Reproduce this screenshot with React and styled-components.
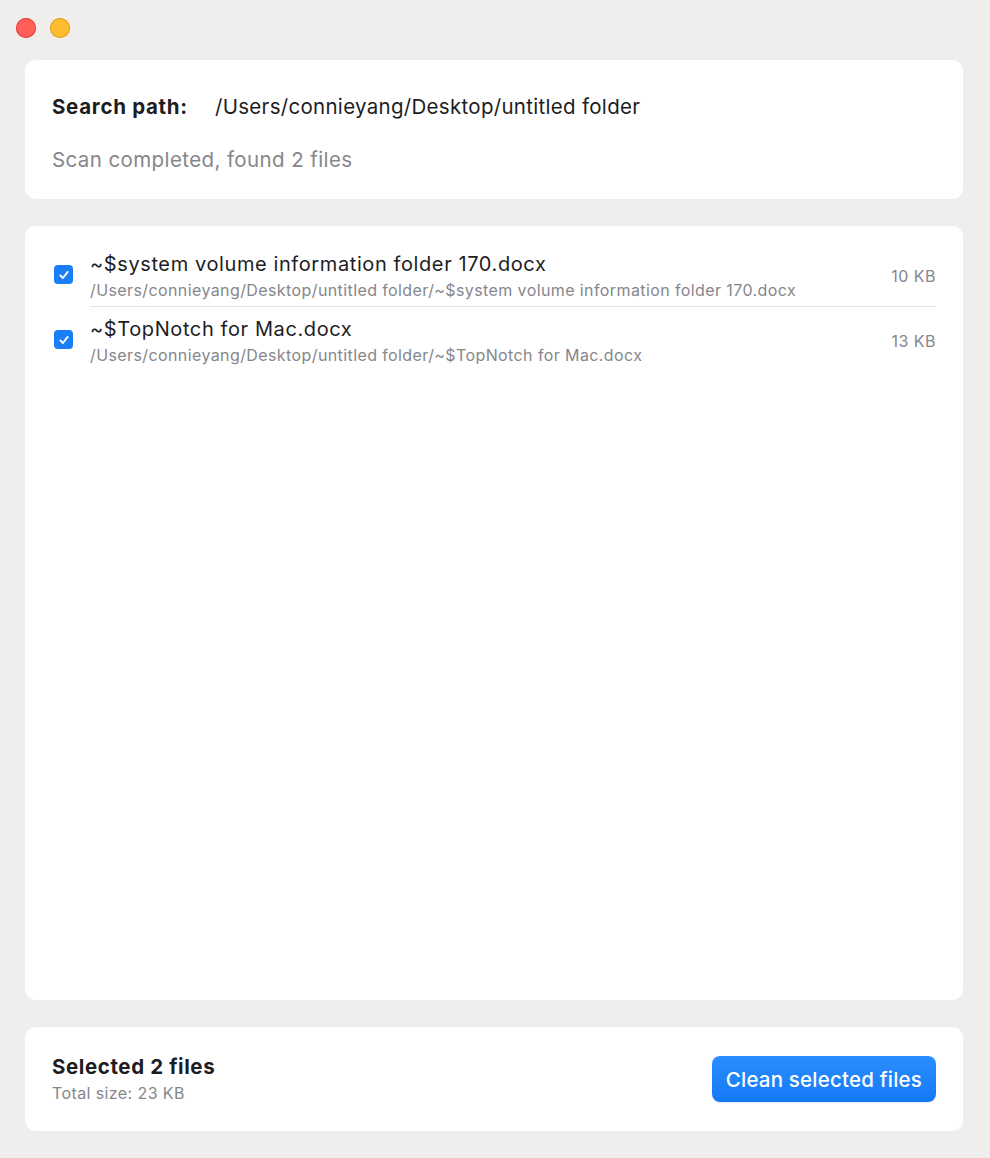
import React from 'react'
import styled, { createGlobalStyle } from 'styled-components'

const GlobalStyle = createGlobalStyle`
  html, body {
    margin: 0;
    padding: 0;
    background: #efeeec;
  }
  body {
    font-family: Inter, "Noto Sans", "Liberation Sans", sans-serif;
    -webkit-font-smoothing: antialiased;
  }
`

const Window = styled.div`
  width: 990px;
  height: 1158px;
  box-sizing: border-box;
  background: #efeeec;
  display: flex;
  flex-direction: column;
`

const TitleBar = styled.div`
  height: 56px;
  display: flex;
  align-items: center;
  gap: 14px;
  padding: 0 0 0 16px;
  box-sizing: border-box;
`

const Light = styled.span`
  width: 20px;
  height: 20px;
  border-radius: 50%;
  background: ${p => p.$color};
  box-shadow: inset 0 0 0 1px ${p => p.$edge};
`

const Content = styled.div`
  flex: 1;
  display: flex;
  flex-direction: column;
  gap: 27px;
  padding: 4px 27px 27px 25px;
  min-height: 0;
`

const Card = styled.div`
  background: #ffffff;
  border-radius: 11px;
  box-sizing: border-box;
`

const HeaderCard = styled(Card)`
  height: 139px;
  padding: 35px 27px 0;
  display: flex;
  flex-direction: column;
  gap: 29px;
`

const PathRow = styled.div`
  display: flex;
  align-items: baseline;
  font-size: 20.5px;
  line-height: 24px;
  color: #1d1d1f;
  letter-spacing: 0.3px;
`

const PathLabel = styled.span`
  font-weight: 700;
  width: 163px;
  letter-spacing: 0.7px;
`

const Status = styled.div`
  font-size: 20.5px;
  line-height: 24px;
  color: #86868b;
  letter-spacing: 0.4px;
`

const ListCard = styled(Card)`
  flex: 1;
  padding: 16px 27px 0 29px;
`

const FileRow = styled.div`
  display: flex;
  align-items: center;
  gap: 17px;
`

const Check = styled.span`
  flex: none;
  width: 19px;
  height: 19px;
  border-radius: 4px;
  background: #1a7ef6;
  display: flex;
  align-items: center;
  justify-content: center;
`

const FileBody = styled.div`
  flex: 1;
  display: flex;
  align-items: center;
  padding: 10px 0 6px;
  border-bottom: 1.5px solid ${p => (p.$divider ? '#e1e1e3' : 'transparent')};
`

const FileText = styled.div`
  flex: 1;
  display: flex;
  flex-direction: column;
  gap: 4px;
`

const FileName = styled.div`
  font-size: 20px;
  line-height: 24px;
  color: #1d1d1f;
  letter-spacing: 0.6px;
`

const FilePath = styled.div`
  font-size: 16px;
  line-height: 20px;
  color: #86868b;
  letter-spacing: 0.4px;
`

const FileSize = styled.div`
  font-size: 16px;
  color: #86868b;
  letter-spacing: 0.5px;
  margin-top: -1px;
`

const FooterCard = styled(Card)`
  height: 104px;
  padding: 0 27px;
  display: flex;
  align-items: center;
  justify-content: space-between;
`

const Summary = styled.div`
  display: flex;
  flex-direction: column;
  gap: 4px;
`

const SummaryTitle = styled.div`
  font-size: 20.5px;
  line-height: 24px;
  font-weight: 700;
  color: #1d1d1f;
  letter-spacing: 0.6px;
`

const SummarySub = styled.div`
  font-size: 16px;
  line-height: 20px;
  color: #86868b;
  letter-spacing: 0.4px;
`

const CleanButton = styled.button`
  height: 46px;
  padding: 0 14px;
  border: none;
  border-radius: 8px;
  background: linear-gradient(#2a8dff, #1479f5);
  color: #ffffff;
  font-family: inherit;
  font-size: 20.5px;
  font-weight: 500;
  letter-spacing: 0.2px;
  box-shadow: 0 1px 1px rgba(0, 0, 0, 0.08);
  cursor: pointer;
`

const CheckMark = () => (
  <svg width="12" height="12" viewBox="0 0 12 12" fill="none">
    <path d="M2.3 6.4 L4.9 9 L9.7 2.9" stroke="#fff" strokeWidth="1.9" strokeLinecap="round" strokeLinejoin="round" />
  </svg>
)

const files = [
  {
    name: '~$system volume information folder 170.docx',
    path: '/Users/connieyang/Desktop/untitled folder/~$system volume information folder 170.docx',
    size: '10 KB',
  },
  {
    name: '~$TopNotch for Mac.docx',
    path: '/Users/connieyang/Desktop/untitled folder/~$TopNotch for Mac.docx',
    size: '13 KB',
  },
]

const App = () => (
  <Window>
    <GlobalStyle />
    <TitleBar>
      <Light $color="#fe5f57" $edge="#e0443e" />
      <Light $color="#febc2e" $edge="#dea123" />
    </TitleBar>
    <Content>
      <HeaderCard>
        <PathRow>
          <PathLabel>Search path:</PathLabel>
          <span>/Users/connieyang/Desktop/untitled folder</span>
        </PathRow>
        <Status>Scan completed, found 2 files</Status>
      </HeaderCard>

      <ListCard>
        {files.map((file, i) => (
          <FileRow key={file.name}>
            <Check>
              <CheckMark />
            </Check>
            <FileBody $divider={i < files.length - 1}>
              <FileText>
                <FileName>{file.name}</FileName>
                <FilePath>{file.path}</FilePath>
              </FileText>
              <FileSize>{file.size}</FileSize>
            </FileBody>
          </FileRow>
        ))}
      </ListCard>

      <FooterCard>
        <Summary>
          <SummaryTitle>Selected 2 files</SummaryTitle>
          <SummarySub>Total size: 23 KB</SummarySub>
        </Summary>
        <CleanButton>Clean selected files</CleanButton>
      </FooterCard>
    </Content>
  </Window>
)

export default App
